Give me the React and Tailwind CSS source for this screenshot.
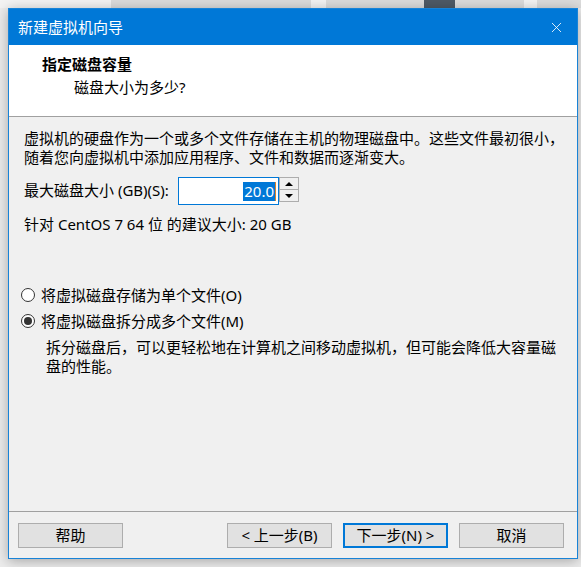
import { X } from 'lucide-react'

function Radio({ checked, label }) {
  return (
    <div className="flex items-center h-[20px] leading-[20px] -ml-[3px]">
      <span className="w-[14px] h-[14px] rounded-full border border-[#333] bg-white flex items-center justify-center shrink-0">
        {checked && <span className="w-[8px] h-[8px] rounded-full bg-[#333]" />}
      </span>
      <span className="ml-[6px]">{label}</span>
    </div>
  )
}

function Btn({ children, primary }) {
  return (
    <button
      className={
        'w-[105px] h-[25px] flex items-center justify-center bg-[#e1e1e1] text-[15px] leading-none ' +
        (primary ? 'border-2 border-[#0078d7]' : 'border border-[#adadad]')
      }
    >
      {children}
    </button>
  )
}

export default function App() {
  return (
    <div
      className="relative w-[581px] h-[567px] overflow-hidden bg-[#ececec] text-[15px] text-black"
      style={{ fontFamily: '"Noto Sans", "Noto Sans CJK SC", sans-serif' }}
    >
      {/* desktop behind the dialog */}
      <div className="absolute left-0 top-0 w-full h-[8px] flex">
        <div className="w-[111px] bg-[#f3f3f3]" />
        <div className="w-[200px] bg-[#dcdcdc]" />
        <div className="w-[15px] bg-[#f3f3f3]" />
        <div className="w-[98px] bg-[#dcdcdc]" />
        <div className="w-[31px] bg-[#4e5a66]" />
        <div className="w-[69px] bg-[#dcdcdc]" />
        <div className="w-[13px] bg-[#f3f3f3]" />
        <div className="flex-1 bg-[#dcdcdc]" />
      </div>

      {/* dialog window */}
      <div className="absolute left-[8px] top-[8px] w-[570px] h-[551px] border border-[#1883d7] bg-[#f0f0f0] flex flex-col shadow-[0_2px_12px_rgba(0,0,0,0.3)]">
        {/* title bar */}
        <div className="h-[36px] bg-[#0078d7] flex items-center pl-[9px] pr-[12px] text-white">
          <span className="leading-none">新建虚拟机向导</span>
          <X className="ml-auto" size={17} strokeWidth={1.2} />
        </div>

        {/* header */}
        <div className="h-[72px] bg-white border-b border-[#a0a0a0] pt-[9px] pl-[33px] leading-[20px]">
          <div className="font-bold">指定磁盘容量</div>
          <div className="ml-[32px] mt-[3px]">磁盘大小为多少?</div>
        </div>

        {/* body */}
        <div className="pl-[15px] pr-[12px] pt-[12px]">
          <p className="leading-[19px] whitespace-nowrap">
            虚拟机的硬盘作为一个或多个文件存储在主机的物理磁盘中。这些文件最初很小，
            <br />
            随着您向虚拟机中添加应用程序、文件和数据而逐渐变大。
          </p>

          <div className="flex items-start mt-[10px]">
            <span className="w-[154px] leading-[27px]">最大磁盘大小 (GB)(S):</span>
            <div className="w-[101px] h-[28px] border border-[#0078d7] bg-white flex items-center justify-end pr-[2px]">
              <span className="bg-[#0078d7] text-white leading-[19px] px-[1px]">20.0</span>
              <span className="w-[1px] h-[19px] bg-[#d9822b]" />
            </div>
            <div className="w-[20px] h-[25px] border border-[#adadad] bg-[#f0f0f0] flex flex-col">
              <div className="flex-1 flex items-center justify-center border-b border-[#adadad]">
                <span className="w-0 h-0 border-l-[4px] border-r-[4px] border-b-[4px] border-l-transparent border-r-transparent border-b-black" />
              </div>
              <div className="flex-1 flex items-center justify-center">
                <span className="w-0 h-0 border-l-[4px] border-r-[4px] border-t-[4px] border-l-transparent border-r-transparent border-t-black" />
              </div>
            </div>
          </div>

          <div className="mt-[10px] leading-[19px]">针对 CentOS 7 64 位 的建议大小: 20 GB</div>

          <div className="mt-[51px]">
            <Radio label="将虚拟磁盘存储为单个文件(O)" />
            <div className="mt-[6px]">
              <Radio checked label="将虚拟磁盘拆分成多个文件(M)" />
            </div>
            <p className="mt-[7px] ml-[22px] leading-[19px] whitespace-nowrap">
              拆分磁盘后，可以更轻松地在计算机之间移动虚拟机，但可能会降低大容量磁
              <br />
              盘的性能。
            </p>
          </div>
        </div>

        {/* footer */}
        <div className="mt-auto border-t border-[#a0a0a0] pt-[11px] pb-[10px] pl-[9px] pr-[13px] flex">
          <Btn>帮助</Btn>
          <div className="ml-auto flex gap-[11px]">
            <Btn>&lt; 上一步(B)</Btn>
            <Btn primary>下一步(N) &gt;</Btn>
            <Btn>取消</Btn>
          </div>
        </div>
      </div>
    </div>
  )
}
